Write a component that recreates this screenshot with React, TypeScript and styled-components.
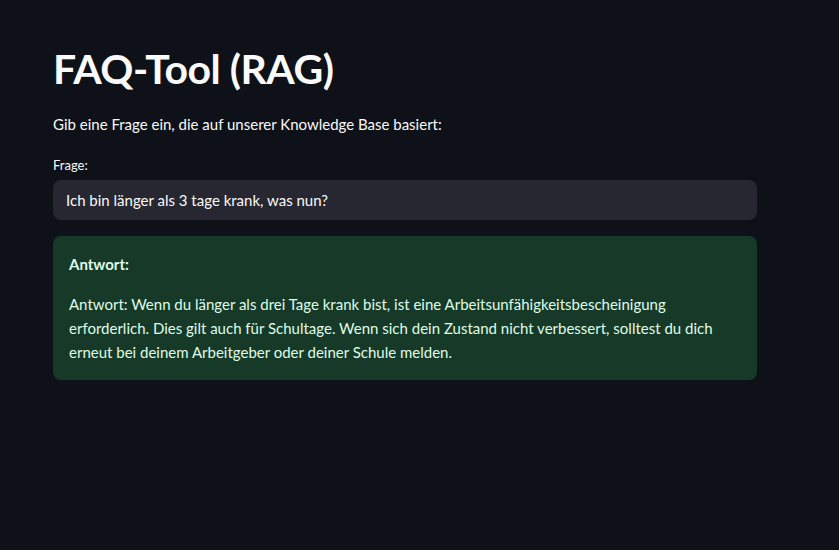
import React from "react";
import styled, { createGlobalStyle } from "styled-components";

const Global = createGlobalStyle`
  html, body {
    margin: 0;
    padding: 0;
    background: #0e1117;
  }
  body {
    font-family: Lato, "Open Sans", sans-serif;
    color: #fafafa;
    -webkit-font-smoothing: antialiased;
  }
`;

const Page = styled.main`
  min-height: 550px;
  background: #0e1117;
  box-sizing: border-box;
  padding: 42px 82px 0 53px;
`;

const Column = styled.div`
  width: 704px;
  display: flex;
  flex-direction: column;
`;

const Title = styled.h1`
  margin: 0;
  font-size: 41px;
  font-weight: 700;
  line-height: 53px;
  letter-spacing: -0.5px;
  color: #fafafa;
`;

const Intro = styled.p`
  margin: 17px 0 0;
  font-size: 15px;
  line-height: 24px;
`;

const Label = styled.label`
  margin-top: 20px;
  font-size: 13px;
  line-height: 18px;
`;

const Input = styled.div`
  margin-top: 6px;
  height: 40px;
  box-sizing: border-box;
  background: #262730;
  border-radius: 8px;
  padding: 0 13px;
  display: flex;
  align-items: center;
  font-size: 15px;
`;

const Answer = styled.section`
  margin-top: 16px;
  background: #173928;
  border-radius: 8px;
  padding: 16px;
  color: #dffde9;
  font-size: 15px;
  line-height: 24px;
`;

const Strong = styled.p`
  margin: 0 0 16px;
  font-weight: 700;
`;

const Body = styled.p`
  margin: 0;
`;

export default function App() {
  return (
    <>
      <Global />
      <Page>
        <Column>
          <Title>FAQ-Tool (RAG)</Title>
          <Intro>Gib eine Frage ein, die auf unserer Knowledge Base basiert:</Intro>
          <Label>Frage:</Label>
          <Input>Ich bin länger als 3 tage krank, was nun?</Input>
          <Answer>
            <Strong>Antwort:</Strong>
            <Body>
              Antwort: Wenn du länger als drei Tage krank bist, ist eine Arbeitsunfähigkeitsbescheinigung
              erforderlich. Dies gilt auch für Schultage. Wenn sich dein Zustand nicht verbessert, solltest du dich
              erneut bei deinem Arbeitgeber oder deiner Schule melden.
            </Body>
          </Answer>
        </Column>
      </Page>
    </>
  );
}
